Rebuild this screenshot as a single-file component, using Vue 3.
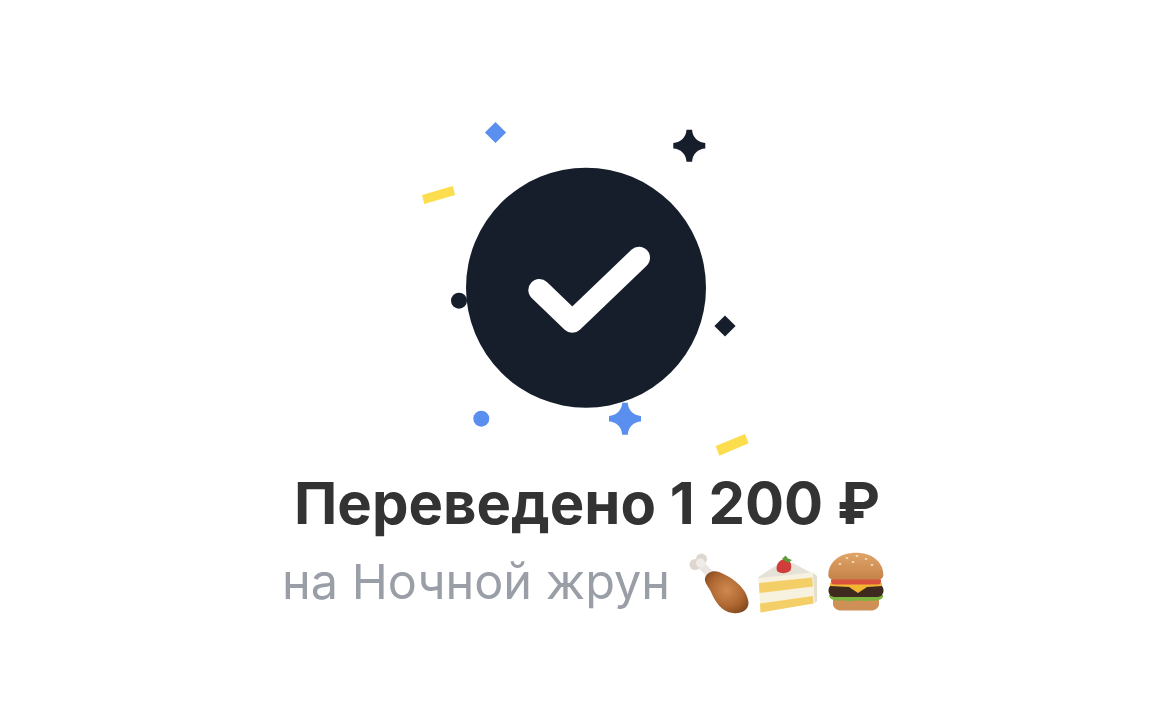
<template>
  <div class="page">
    <svg class="hero" viewBox="0 0 360 350" aria-hidden="true">
      <g class="blue">
        <rect x="82" y="15" width="15" height="15" transform="rotate(45 89.5 22.5)" />
        <circle cx="75.3" cy="308.7" r="8" />
        <path :d="sparkle" transform="translate(219 308.7)" />
      </g>
      <g class="dark">
        <circle cx="53" cy="190.7" r="8" />
        <rect x="311.5" y="208.5" width="15" height="15" transform="rotate(45 319 216)" />
        <path :d="sparkle" transform="translate(283.3 35.7)" />
      </g>
      <g class="yellow">
        <polygon points="16,85 46.7,76 49,85 18.3,94" />
        <polygon points="309.7,336 339,324 342.7,333.3 313.3,345.7" />
      </g>
      <circle class="dark" cx="180" cy="177.7" r="120" />
      <path class="check" d="M133.3 180 166.3 211.7 233 147.7" />
    </svg>

    <h1 class="title">Переведено 1 200 ₽</h1>

    <div class="sub">
      <span class="sub-text">на Ночной жрун</span>
      <div class="emojis">
        <svg class="emoji" viewBox="0 0 60 62" aria-hidden="true">
          <defs>
            <radialGradient id="meat" cx="0.5" cy="0.45" r="0.72">
              <stop offset="0" stop-color="#cf8a50" />
              <stop offset="0.55" stop-color="#ad6630" />
              <stop offset="1" stop-color="#6f3c18" />
            </radialGradient>
          </defs>
          <path d="M11 12 23 24" stroke="#ebe5df" stroke-width="8" stroke-linecap="round" />
          <circle cx="12.5" cy="7" r="5.500" fill="#ded7d0" />
          <circle cx="6" cy="12.500" r="5.500" fill="#ded7d0" />
          <circle cx="11.500" cy="11" r="4.500" fill="#f1ece7" />
          <path fill="url(#meat)" d="M16 26C18 20 24 18 30 20 43 25 58 36 59.500 50 60 59 51 62 44 61 32 60 26 49 22 40 20 35 15 31 16 26Z" />
        </svg>
        <svg class="emoji" viewBox="0 0 60 62" aria-hidden="true">
          <path fill="#e6e2d8" d="M0.500 25 17 14 35 11 59 24 59 49 54 52 54 24 0.500 29Z" />
          <path fill="#f7f1df" d="M0.500 26 55 20.500 57 51 2.500 60.500Z" />
          <path fill="#f4cf68" d="M1 31 54 25.500 55 34.500 1.500 41Z" />
          <path fill="#f4cf68" d="M2 51.500 55 44 55.500 51.500 2.500 60.500Z" />
          <path fill="#e3decd" d="M55 21 59 24 59 49 57 51Z" />
          <path fill="#cf3e3a" d="M19 19C17 12 22 7 27.500 7 32.500 7.500 34.500 13 32.500 18.500 28 22 23 22 19 19Z" />
          <path fill="#5c9a3a" d="M24 7 27.500 3.500 30 6.500 34 8 30.500 10.500 27 9Z" />
        </svg>
        <svg class="emoji" viewBox="0 0 60 62" aria-hidden="true">
          <defs>
            <linearGradient id="bun" x1="0" y1="0" x2="0" y2="1">
              <stop offset="0" stop-color="#e0a469" />
              <stop offset="1" stop-color="#c58349" />
            </linearGradient>
          </defs>
          <path fill="#cf9058" d="M6 46H52V52C52 56 48 58.500 44 58.500H14C10 58.500 6 56 6 52Z" />
          <path fill="#7cb23e" d="M2 43C6 40 50 40 56 43 57 47 52 48 48 49 44 47 40 50 36 49 30 47 26 50 20 49 14 47 10 50 7 48 4 47 2 46 2 43Z" />
          <rect x="1.500" y="32" width="55" height="13" rx="6" fill="#3f2a1f" />
          <path fill="#f2b632" d="M3 31H55V34L40 35 31 41 22 35 3 34Z" />
          <rect x="4" y="26" width="50" height="6.500" rx="3" fill="#d9533f" />
          <path fill="url(#bun)" d="M1.300 23C1.300 9 14 0.700 29 0.700S56.300 9 56.300 23C56.300 26 54 27.500 51 27.500H7C3.500 27.500 1.300 26 1.300 23Z" />
          <g fill="#f3ddb6">
            <ellipse cx="20" cy="6" rx="1.400" ry="0.900" />
            <ellipse cx="30" cy="4" rx="1.400" ry="0.900" />
            <ellipse cx="39" cy="7" rx="1.400" ry="0.900" />
            <ellipse cx="13" cy="12" rx="1.400" ry="0.900" />
            <ellipse cx="26" cy="10" rx="1.400" ry="0.900" />
            <ellipse cx="45" cy="13" rx="1.400" ry="0.900" />
          </g>
        </svg>
      </div>
    </div>
  </div>
</template>

<script setup>
// four-point star with blunt tips, centred on 0,0
const sparkle = 'M-2.800 -16H2.800C3.200 -8.500 8.500 -3.200 16 -2.800V2.800C8.500 3.200 3.200 8.500 2.800 16H-2.800C-3.200 8.500 -8.500 3.200 -16 2.800V-2.800C-8.500 -3.200 -3.200 -8.500 -2.800 -16Z'
</script>

<style>
html, body { background: #fff; }
</style>

<style scoped>
.page {
  display: flex;
  flex-direction: column;
  align-items: center;
  height: 706px;
  padding-top: 110px;
  box-sizing: border-box;
  overflow: hidden;
  font-family: Inter, "Liberation Sans", sans-serif;
}
.hero {
  display: block;
  width: 360px;
  height: 350px;
  flex-shrink: 0;
}
.blue { fill: #5a8ff0; }
.dark { fill: #171e2b; }
.yellow { fill: #fbdd4e; }
.check {
  fill: none;
  stroke: #fff;
  stroke-width: 22;
  stroke-linecap: round;
  stroke-linejoin: round;
}
.title {
  margin: 9px 0 0 2px;
  font-size: 58px;
  line-height: 68px;
  font-weight: 700;
  color: #333;
  white-space: nowrap;
}
.sub {
  display: flex;
  align-items: flex-start;
  gap: 19px;
  margin: 13px 3px 0 0;
  font-size: 48.6px;
  line-height: 62px;
  color: #9a9ea6;
  white-space: nowrap;
}
.sub-text { margin-top: 1px; }
.emojis {
  display: flex;
  gap: 9px;
  margin-top: 2px;
}
.emoji {
  display: block;
  width: 60px;
  height: 62px;
}
</style>
